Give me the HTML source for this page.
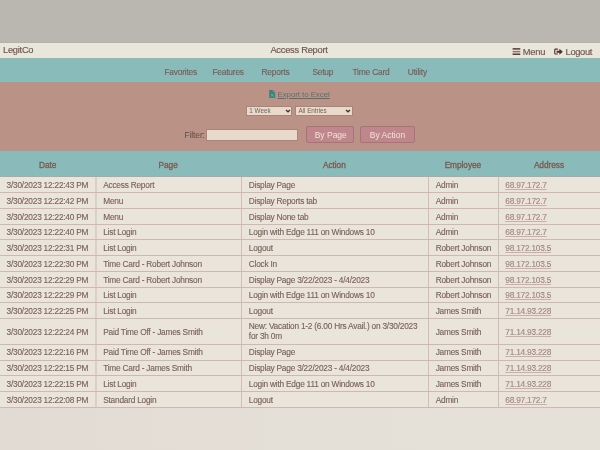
<!DOCTYPE html>
<html><head><meta charset="utf-8">
<style>
*{margin:0;padding:0;box-sizing:border-box}
html,body{width:600px;height:450px;overflow:hidden}
body{background:linear-gradient(90deg,#e2dbd4,#e4dfd7 50%,#e5e1d9);font-family:"Liberation Sans",sans-serif;color:#6d5a55;position:relative}
div,span{position:absolute;white-space:nowrap}
.top{left:0;top:0;width:600px;height:42.5px;background:#b9b7b0}
.hdr{left:0;top:42.5px;width:600px;height:15.2px;background:#e9e6dc;font-size:9.3px;color:#6f544f;line-height:15.2px;letter-spacing:-0.1px;-webkit-text-stroke:0.15px #6f544f}
.nav{left:0;top:57.7px;width:600px;height:24.3px;background:#88bbb9;font-size:8.4px;color:#7a5a53;line-height:24.3px;letter-spacing:-0.2px;-webkit-text-stroke:0.12px #7a5a53}
.filt{left:0;top:82px;width:600px;height:69px;background:#bb9386}
.exp{font-size:8px;color:#50736f;text-decoration:underline;text-decoration-thickness:0.6px;text-underline-offset:0.5px;line-height:10px;letter-spacing:-0.1px}
.sel{height:10px;background:#e8d9cb;border:0.7px solid #a88579;font-size:6.3px;color:#735e58;line-height:8.2px}
.sel span{left:2px;top:0}
.flab{font-size:8.5px;color:#5e4c47;line-height:10px;letter-spacing:-0.15px}
.inp{background:#e8d9cb;border:0.7px solid #a88579}
.btn{height:16.8px;background:#bf878c;border:1px solid #a5747a;border-radius:2px;font-size:8.5px;color:#f1e4d8;line-height:17.8px}
.th{left:0;top:151px;width:600px;height:25px;background:#88bbb9}
.th span{font-weight:normal;-webkit-text-stroke:0.3px #7c5850;letter-spacing:-0.05px;font-size:8.3px;color:#7c5850;line-height:10px;top:9.3px}
.tb{left:0;top:176.6px;width:600px;height:230.38px;background:#e9e5db}
.hl{left:0;width:600px;height:1px;background:#d1b7b0}
.vl{top:176.6px;height:230.38px;width:1.2px;background:#dccbc3}
.c{font-size:8.3px;letter-spacing:-0.22px;line-height:10px;color:#7b605a;-webkit-text-stroke:0.12px #7b605a}
.a{color:#b3908c;text-decoration:underline;text-decoration-thickness:0.7px;text-underline-offset:0.6px;text-decoration-color:#c9aeab}
</style></head><body>

<div style="left:0;top:0;width:600px;height:450px;will-change:transform">
<div class="top"></div>
<div class="hdr">
<span style="left:3px;top:0.3px;letter-spacing:-0.25px">LegitCo</span>
<span style="left:270.4px;top:0.3px;letter-spacing:-0.25px">Access Report</span>
<span style="left:522.7px;top:2.4px;letter-spacing:-0.15px">Menu</span>
<span style="left:565.6px;top:2.4px;letter-spacing:-0.35px">Logout</span>
<svg style="position:absolute;left:0;top:0" width="600" height="16" viewBox="0 43.2 600 16"><g fill="#4d2e27"><rect x="512.6" y="48.4" width="7.7" height="1.4"/><rect x="512.6" y="51.1" width="7.7" height="1.5" fill="#8a7570"/><rect x="512.6" y="53.7" width="7.7" height="1.4"/><path d="M557.8 48.8 H555.6 Q554.2 48.8 554.2 50.2 V53.4 Q554.2 54.8 555.6 54.8 H557.8 V53.7 H555.6 Q555.3 53.7 555.3 53.4 V50.2 Q555.3 49.9 555.6 49.9 H557.8 Z"/><path d="M556.6 50.9 H559.4 V48.9 L562.8 51.9 L559.4 54.9 V52.9 H556.6 Z"/></g></svg>
</div>
<div class="nav">
<span style="left:164.4px;top:2.0px">Favorites</span>
<span style="left:212.4px;top:2.0px">Features</span>
<span style="left:261.5px;top:2.0px">Reports</span>
<span style="left:312.4px;top:2.0px">Setup</span>
<span style="left:352.5px;top:2.0px">Time Card</span>
<span style="left:407.8px;top:2.0px">Utility</span>
</div>
<div class="filt"></div>
<div class="exp" style="left:277.4px;top:89.6px">Export to Excel</div>
<div class="sel" style="left:246.3px;top:105.7px;width:46px"><span>1 Week</span></div>
<div class="sel" style="left:295.4px;top:105.7px;width:57.4px"><span>All Entries</span></div>
<div class="flab" style="left:184.6px;top:130.2px">Filter:</div>
<div class="inp" style="left:206.4px;top:129px;width:92px;height:12.4px"></div>
<div class="btn" style="left:305.6px;top:126px;width:48.4px"><span style="left:8.1px;top:0">By Page</span></div>
<div class="btn" style="left:360.4px;top:126px;width:54.6px"><span style="left:8.4px;top:0">By Action</span></div>
<svg style="position:absolute;left:0;top:0" width="600" height="150" viewBox="0 0 600 150"><path d="M269.2 90 H273.4 L275.2 91.8 V98 H269.2 Z" fill="#2f8880"/><path d="M273.3 90 V91.9 H275.2" fill="none" stroke="#bb9386" stroke-width="0.6"/><path d="M270.9 93.8 L273.5 96.6 M273.5 93.8 L270.9 96.6" stroke="#bb9386" stroke-width="0.8"/><g fill="none" stroke="#4d2e27" stroke-width="1.3"><path d="M286 110 L288 111.8 L290 110"/><path d="M346 110 L348 111.8 L350 110"/></g></svg>
<div class="th">
<span style="left:0px;width:95.5px;text-align:center">Date</span>
<span style="left:95.5px;width:145.3px;text-align:center">Page</span>
<span style="left:240.8px;width:187.1px;text-align:center">Action</span>
<span style="left:427.9px;width:70.0px;text-align:center">Employee</span>
<span style="left:497.9px;width:102.1px;text-align:center">Address</span>
</div>
<div class="tb"></div>
<div style="left:0;top:175px;width:600px;height:1px;background:#83bdbc"></div><div style="left:0;top:176px;width:600px;height:1px;background:#a4abaa"></div><div style="left:0;top:42px;width:600px;height:1px;background:#b3b1ab"></div>
<div class="vl" style="left:95px;width:2px;background:#ddcec6"></div>
<div class="vl" style="left:241px;width:1px;background:#d3bcb6"></div>
<div class="vl" style="left:428px;width:1px;background:#d3bcb6"></div>
<div class="vl" style="left:498px;width:1px;background:#d3bcb6"></div>
<div class="hl" style="top:192.16px"></div>
<div class="hl" style="top:207.92px"></div>
<div class="hl" style="top:223.68px"></div>
<div class="hl" style="top:239.44px"></div>
<div class="hl" style="top:255.2px"></div>
<div class="hl" style="top:270.96px"></div>
<div class="hl" style="top:286.72px"></div>
<div class="hl" style="top:302.48px"></div>
<div class="hl" style="top:318.24px"></div>
<div class="hl" style="top:343.74px"></div>
<div class="hl" style="top:359.5px"></div>
<div class="hl" style="top:375.26px"></div>
<div class="hl" style="top:391.02px"></div>
<div class="hl" style="top:406.78px"></div>
<div class="c" style="left:6.6px;top:179.98px">3/30/2023 12:22:43 PM</div>
<div class="c" style="left:103.2px;top:179.98px">Access Report</div>
<div class="c" style="left:248.8px;top:179.98px">Display Page</div>
<div class="c" style="left:435.7px;top:179.98px">Admin</div>
<div class="c a" style="left:505.3px;top:179.98px">68.97.172.7</div>
<div class="c" style="left:6.6px;top:195.74px">3/30/2023 12:22:42 PM</div>
<div class="c" style="left:103.2px;top:195.74px">Menu</div>
<div class="c" style="left:248.8px;top:195.74px">Display Reports tab</div>
<div class="c" style="left:435.7px;top:195.74px">Admin</div>
<div class="c a" style="left:505.3px;top:195.74px">68.97.172.7</div>
<div class="c" style="left:6.6px;top:211.5px">3/30/2023 12:22:40 PM</div>
<div class="c" style="left:103.2px;top:211.5px">Menu</div>
<div class="c" style="left:248.8px;top:211.5px">Display None tab</div>
<div class="c" style="left:435.7px;top:211.5px">Admin</div>
<div class="c a" style="left:505.3px;top:211.5px">68.97.172.7</div>
<div class="c" style="left:6.6px;top:227.26px">3/30/2023 12:22:40 PM</div>
<div class="c" style="left:103.2px;top:227.26px">List Login</div>
<div class="c" style="left:248.8px;top:227.26px">Login with Edge 111 on Windows 10</div>
<div class="c" style="left:435.7px;top:227.26px">Admin</div>
<div class="c a" style="left:505.3px;top:227.26px">68.97.172.7</div>
<div class="c" style="left:6.6px;top:243.02px">3/30/2023 12:22:31 PM</div>
<div class="c" style="left:103.2px;top:243.02px">List Login</div>
<div class="c" style="left:248.8px;top:243.02px">Logout</div>
<div class="c" style="left:435.7px;top:243.02px">Robert Johnson</div>
<div class="c a" style="left:505.3px;top:243.02px">98.172.103.5</div>
<div class="c" style="left:6.6px;top:258.78px">3/30/2023 12:22:30 PM</div>
<div class="c" style="left:103.2px;top:258.78px">Time Card - Robert Johnson</div>
<div class="c" style="left:248.8px;top:258.78px">Clock In</div>
<div class="c" style="left:435.7px;top:258.78px">Robert Johnson</div>
<div class="c a" style="left:505.3px;top:258.78px">98.172.103.5</div>
<div class="c" style="left:6.6px;top:274.54px">3/30/2023 12:22:29 PM</div>
<div class="c" style="left:103.2px;top:274.54px">Time Card - Robert Johnson</div>
<div class="c" style="left:248.8px;top:274.54px">Display Page 3/22/2023 - 4/4/2023</div>
<div class="c" style="left:435.7px;top:274.54px">Robert Johnson</div>
<div class="c a" style="left:505.3px;top:274.54px">98.172.103.5</div>
<div class="c" style="left:6.6px;top:290.3px">3/30/2023 12:22:29 PM</div>
<div class="c" style="left:103.2px;top:290.3px">List Login</div>
<div class="c" style="left:248.8px;top:290.3px">Login with Edge 111 on Windows 10</div>
<div class="c" style="left:435.7px;top:290.3px">Robert Johnson</div>
<div class="c a" style="left:505.3px;top:290.3px">98.172.103.5</div>
<div class="c" style="left:6.6px;top:306.06px">3/30/2023 12:22:25 PM</div>
<div class="c" style="left:103.2px;top:306.06px">List Login</div>
<div class="c" style="left:248.8px;top:306.06px">Logout</div>
<div class="c" style="left:435.7px;top:306.06px">James Smith</div>
<div class="c a" style="left:505.3px;top:306.06px">71.14.93.228</div>
<div class="c" style="left:6.6px;top:326.69px">3/30/2023 12:22:24 PM</div>
<div class="c" style="left:103.2px;top:326.69px">Paid Time Off - James Smith</div>
<div class="c" style="left:248.8px;top:320.59px;line-height:10.4px">New: Vacation 1-2 (6.00 Hrs Avail.) on 3/30/2023<br>for 3h 0m</div>
<div class="c" style="left:435.7px;top:326.69px">James Smith</div>
<div class="c a" style="left:505.3px;top:326.69px">71.14.93.228</div>
<div class="c" style="left:6.6px;top:347.32px">3/30/2023 12:22:16 PM</div>
<div class="c" style="left:103.2px;top:347.32px">Paid Time Off - James Smith</div>
<div class="c" style="left:248.8px;top:347.32px">Display Page</div>
<div class="c" style="left:435.7px;top:347.32px">James Smith</div>
<div class="c a" style="left:505.3px;top:347.32px">71.14.93.228</div>
<div class="c" style="left:6.6px;top:363.08px">3/30/2023 12:22:15 PM</div>
<div class="c" style="left:103.2px;top:363.08px">Time Card - James Smith</div>
<div class="c" style="left:248.8px;top:363.08px">Display Page 3/22/2023 - 4/4/2023</div>
<div class="c" style="left:435.7px;top:363.08px">James Smith</div>
<div class="c a" style="left:505.3px;top:363.08px">71.14.93.228</div>
<div class="c" style="left:6.6px;top:378.84px">3/30/2023 12:22:15 PM</div>
<div class="c" style="left:103.2px;top:378.84px">List Login</div>
<div class="c" style="left:248.8px;top:378.84px">Login with Edge 111 on Windows 10</div>
<div class="c" style="left:435.7px;top:378.84px">James Smith</div>
<div class="c a" style="left:505.3px;top:378.84px">71.14.93.228</div>
<div class="c" style="left:6.6px;top:394.6px">3/30/2023 12:22:08 PM</div>
<div class="c" style="left:103.2px;top:394.6px">Standard Login</div>
<div class="c" style="left:248.8px;top:394.6px">Logout</div>
<div class="c" style="left:435.7px;top:394.6px">Admin</div>
<div class="c a" style="left:505.3px;top:394.6px">68.97.172.7</div>
</div>
</body></html>
